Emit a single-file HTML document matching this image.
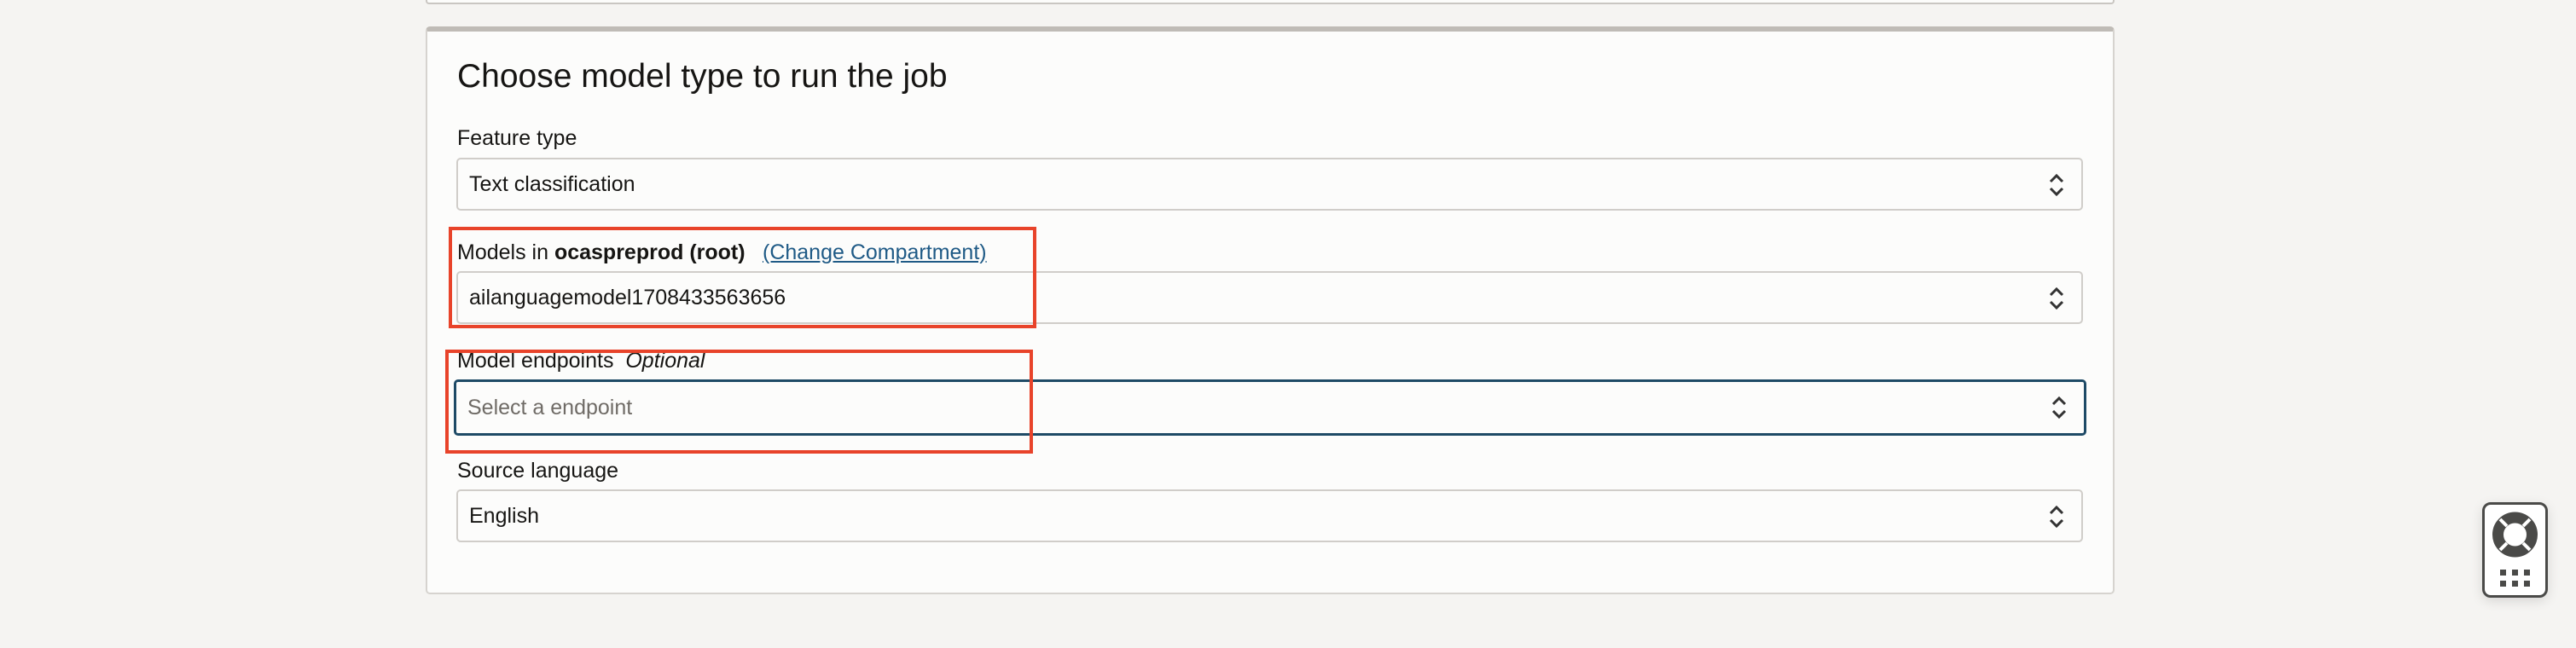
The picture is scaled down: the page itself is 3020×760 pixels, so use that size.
<!DOCTYPE html>
<html><head><meta charset="utf-8"><style>
*{box-sizing:border-box;margin:0;padding:0}
body{width:3020px;height:760px;background:#f5f4f2;font-family:"Liberation Sans",sans-serif;color:#161513;position:relative;overflow:hidden}
.abs{position:absolute}
.top{left:499px;top:-10px;width:1980px;height:15px;border:2px solid #c9c6c2;border-top:none;border-radius:0 0 4px 4px;background:#fcfcfb}
.card{left:499px;top:31px;width:1980px;height:666px;background:#fcfcfb;border:2px solid #d6d3cf;border-top:6px solid #bfbbb6;border-radius:5px}
.title{left:536px;top:68px;font-size:39px}
.lbl{font-size:25px;left:536px}
.sel{left:535px;width:1907px;height:62px;border:2px solid #d0cdc9;border-radius:5px;background:#fcfcfb;font-size:25px;padding-left:13px;line-height:58px}
.chev{position:absolute;right:18px;top:15px}
.red{border:4px solid #e8432a}
</style></head><body>
<div class="abs top"></div>
<div class="abs card"></div>
<div class="abs title">Choose model type to run the job</div>
<div class="abs lbl" style="top:148px">Feature type</div>
<div class="abs sel" style="top:185px">Text classification<svg class="chev" width="22" height="30" viewBox="0 0 22 30"><path d="M4 11 L11 4 L18 11 M4 19 L11 26 L18 19" fill="none" stroke="#333" stroke-width="3"/></svg></div>
<div class="abs lbl" style="top:282px">Models in <b>ocaspreprod (root)</b></div>
<div class="abs lbl" style="top:282px;left:894px;color:#1f5a86;text-decoration:underline">(Change Compartment)</div>
<div class="abs sel" style="top:318px">ailanguagemodel1708433563656<svg class="chev" width="22" height="30" viewBox="0 0 22 30"><path d="M4 11 L11 4 L18 11 M4 19 L11 26 L18 19" fill="none" stroke="#333" stroke-width="3"/></svg></div>
<div class="abs lbl" style="top:409px">Model endpoints &nbsp;<i>Optional</i></div>
<div class="abs sel" style="top:445px;left:532px;width:1914px;height:66px;border:3px solid #1e4a66;color:#6f6b66;line-height:60px">Select a endpoint<svg class="chev" width="22" height="30" viewBox="0 0 22 30"><path d="M4 11 L11 4 L18 11 M4 19 L11 26 L18 19" fill="none" stroke="#333" stroke-width="3"/></svg></div>
<div class="abs lbl" style="top:538px">Source language</div>
<div class="abs sel" style="top:574px">English<svg class="chev" width="22" height="30" viewBox="0 0 22 30"><path d="M4 11 L11 4 L18 11 M4 19 L11 26 L18 19" fill="none" stroke="#333" stroke-width="3"/></svg></div>
<div class="abs red" style="left:526px;top:266px;width:689px;height:119px"></div>
<div class="abs red" style="left:522px;top:410px;width:689px;height:122px"></div>
<div class="abs" style="left:2910px;top:589px;width:77px;height:112px;border:3px solid #4a4a48;border-radius:10px;background:#fff;box-shadow:0 4px 14px rgba(0,0,0,.12)">
<svg width="71" height="106" viewBox="0 0 71 106"><circle cx="35.5" cy="35" r="20" fill="none" stroke="#4a4a48" stroke-width="13"/><g stroke="#fff" stroke-width="4"><path d="M18 17 L26 25 M53 17 L45 25 M18 53 L26 45 M53 53 L45 45"/></g><g fill="#4a4a48"><rect x="18" y="76" width="7" height="7"/><rect x="32" y="76" width="7" height="7"/><rect x="46" y="76" width="7" height="7"/><rect x="18" y="89" width="7" height="7"/><rect x="32" y="89" width="7" height="7"/><rect x="46" y="89" width="7" height="7"/></g></svg></div>
</body></html>
